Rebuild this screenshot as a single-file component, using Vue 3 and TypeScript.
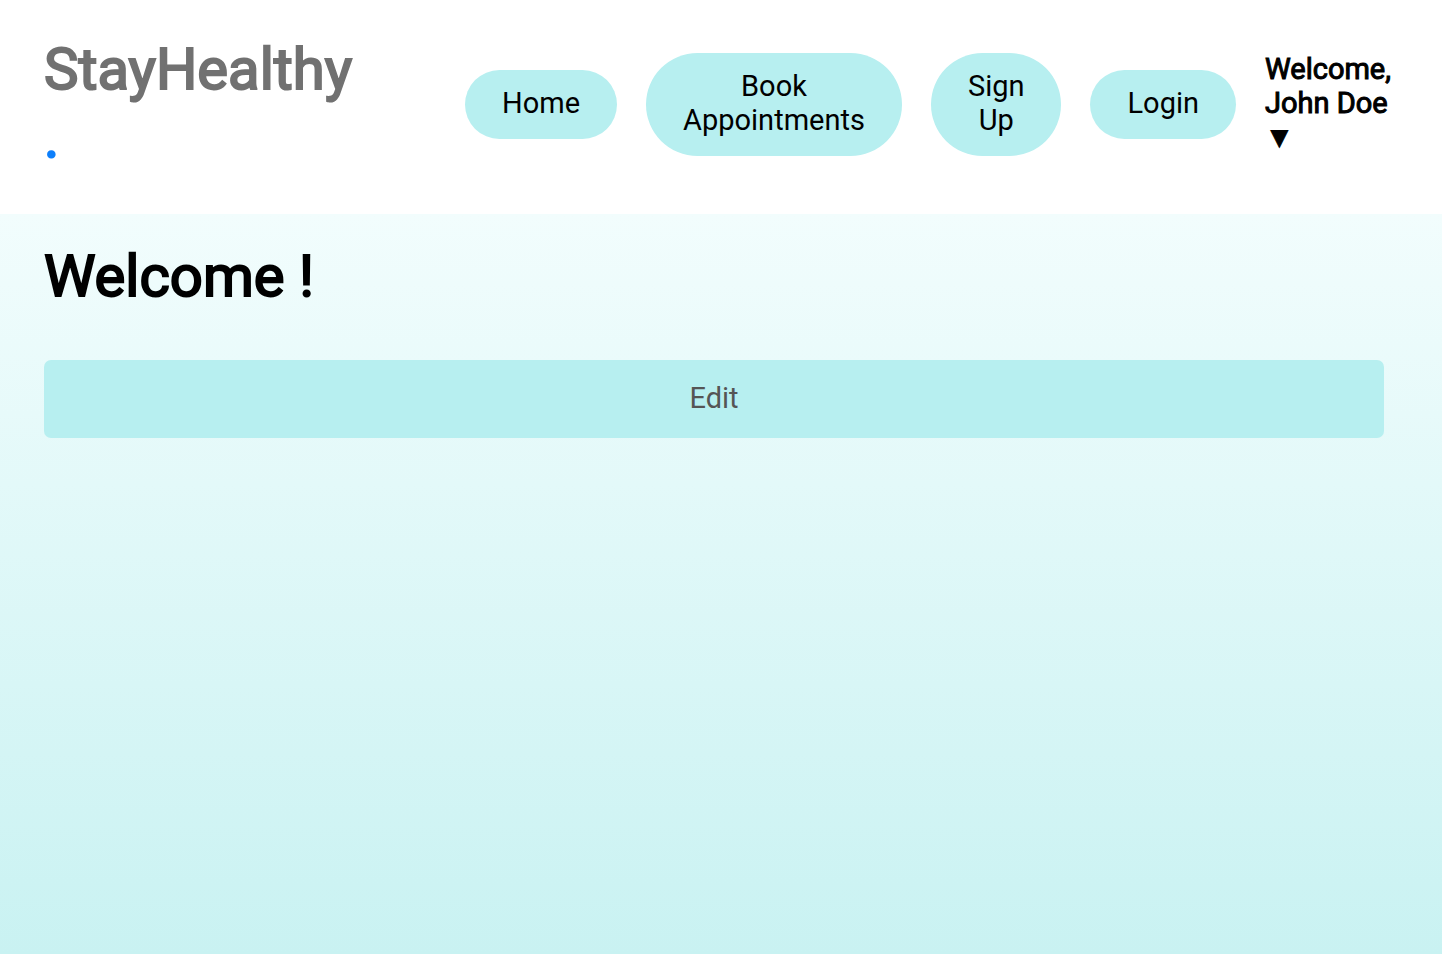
<script setup lang="ts">
interface NavItem {
  label: string
  href: string
}

const links: NavItem[] = [
  { label: 'Home', href: '#home' },
  { label: 'Book Appointments', href: '#appointments' },
  { label: 'Sign Up', href: '#signup' },
  { label: 'Login', href: '#login' },
]
</script>

<template>
  <div class="page">
    <header class="navbar">
      <a class="brand" href="#home">StayHealthy<span class="dot">.</span></a>
      <nav class="nav">
        <a v-for="item in links" :key="item.label" class="pill" :href="item.href">{{ item.label }}</a>
        <button class="user" type="button">Welcome, John Doe ▼</button>
      </nav>
    </header>
    <main class="profile">
      <h1 class="title">Welcome !</h1>
      <button class="edit" type="button">Edit</button>
    </main>
  </div>
</template>

<style>
body {
  margin: 0;
}
</style>

<style scoped>
.page {
  min-height: 100vh;
  display: flex;
  flex-direction: column;
  box-sizing: border-box;
  font-family: Roboto, "Liberation Sans", sans-serif;
  font-size: 29px;
  line-height: 34px;
  color: #000;
}
.navbar {
  display: flex;
  align-items: center;
  gap: 96px;
  min-height: 214px;
  box-sizing: border-box;
  padding: 35px 44px 40px;
  background: #fff;
}
.brand {
  flex: 0 0 325px;
  align-self: flex-start;
  display: flex;
  flex-direction: column;
  font-size: 58px;
  line-height: 68px;
  font-weight: 400;
  -webkit-text-stroke: 2px currentColor;
  color: #717171;
  text-decoration: none;
}
.dot {
  color: #0d7ffb;
}
.nav {
  flex: 1;
  display: flex;
  align-items: center;
  gap: 29px;
}
.pill {
  width: min-content;
  padding: 16px 37px 19px;
  border-radius: 56px;
  background: #b7eff0;
  color: #000;
  text-align: center;
  text-decoration: none;
}
.user {
  flex: 1;
  padding: 0 0 4px;
  border: 0;
  background: none;
  color: #000;
  font: inherit;
  -webkit-text-stroke: 1px currentColor;
  text-align: left;
}
.profile {
  flex: 1;
  padding: 27px 58px 44px 44px;
  background: linear-gradient(#f2fdfd, #c9f2f2);
}
.title {
  margin: 0 0 49px;
  font-size: 58px;
  line-height: 70px;
  font-weight: 400;
  -webkit-text-stroke: 2px currentColor;
}
.edit {
  width: 100%;
  height: 78px;
  padding: 0 0 2px;
  border: 0;
  border-radius: 7px;
  background: #b7eff0;
  color: #555;
  font: inherit;
}
</style>
